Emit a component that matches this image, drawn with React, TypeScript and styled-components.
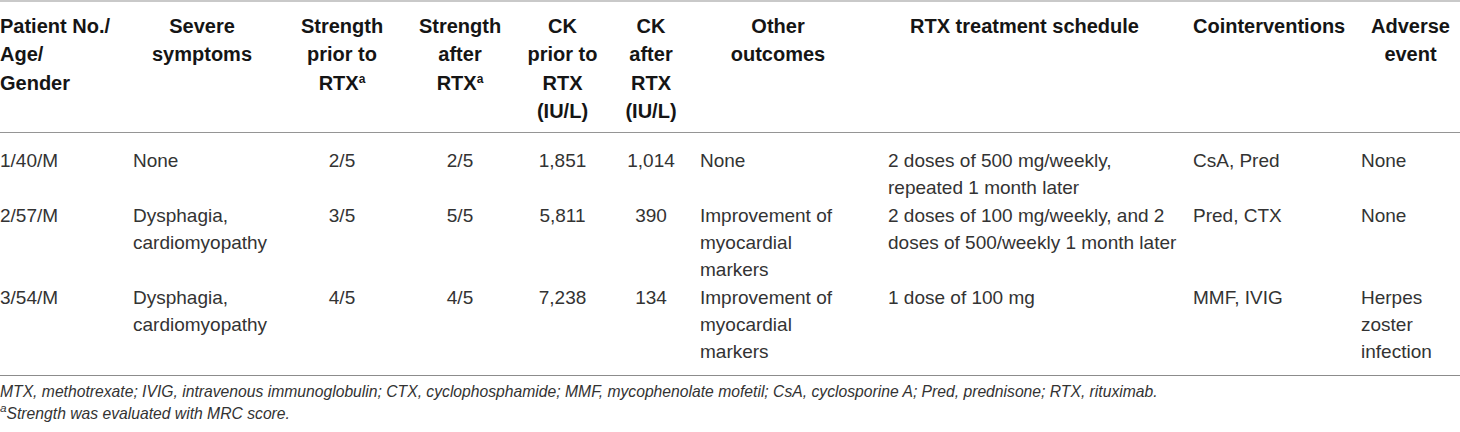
import React from "react";
import styled, { createGlobalStyle } from "styled-components";

type Align = "left" | "center";

interface Column {
  width: number;
  head: React.ReactNode;
  headAlign: Align;
  cellAlign: Align;
  padLeft: number;
  headPadRight: number;
  cellPadRight: number;
}

const GlobalStyle = createGlobalStyle`
  html, body {
    margin: 0;
    padding: 0;
    background: #ffffff;
  }
  body {
    font-family: "Liberation Sans", Arial, Helvetica, sans-serif;
    color: #222;
  }
`;

const Sup = styled.sup<{ $size?: number }>`
  font-size: ${(p) => p.$size ?? 0.6}em;
  line-height: 0;
  vertical-align: 0.6em;
`;

const columns: Column[] = [
  { width: 133, head: <>Patient No./<br />Age/<br />Gender</>, headAlign: "left", cellAlign: "left", padLeft: 0, headPadRight: 0, cellPadRight: 0 },
  { width: 138, head: <>Severe<br />symptoms</>, headAlign: "center", cellAlign: "left", padLeft: 0, headPadRight: 0, cellPadRight: 0 },
  { width: 142, head: <>Strength<br />prior to<br />RTX<Sup>a</Sup></>, headAlign: "center", cellAlign: "center", padLeft: 0, headPadRight: 0, cellPadRight: 0 },
  { width: 94, head: <>Strength<br />after<br />RTX<Sup>a</Sup></>, headAlign: "center", cellAlign: "center", padLeft: 0, headPadRight: 0, cellPadRight: 0 },
  { width: 111, head: <>CK<br />prior to<br />RTX<br />(IU/L)</>, headAlign: "center", cellAlign: "center", padLeft: 0, headPadRight: 0, cellPadRight: 0 },
  { width: 66, head: <>CK<br />after<br />RTX<br />(IU/L)</>, headAlign: "center", cellAlign: "center", padLeft: 0, headPadRight: 0, cellPadRight: 0 },
  { width: 188, head: <>Other<br />outcomes</>, headAlign: "center", cellAlign: "left", padLeft: 16, headPadRight: 16, cellPadRight: 16 },
  { width: 305, head: <>RTX treatment schedule</>, headAlign: "center", cellAlign: "left", padLeft: 16, headPadRight: 16, cellPadRight: 0 },
  { width: 184, head: <>Cointerventions</>, headAlign: "left", cellAlign: "left", padLeft: 16, headPadRight: 0, cellPadRight: 0 },
  { width: 99, head: <>Adverse<br />event</>, headAlign: "center", cellAlign: "left", padLeft: 0, headPadRight: 0, cellPadRight: 0 },
];

const rows: string[][] = [
  ["1/40/M", "None", "2/5", "2/5", "1,851", "1,014", "None", "2 doses of 500 mg/weekly, repeated 1 month later", "CsA, Pred", "None"],
  ["2/57/M", "Dysphagia, cardiomyopathy", "3/5", "5/5", "5,811", "390", "Improvement of myocardial markers", "2 doses of 100 mg/weekly, and 2 doses of 500/weekly 1 month later", "Pred, CTX", "None"],
  ["3/54/M", "Dysphagia, cardiomyopathy", "4/5", "4/5", "7,238", "134", "Improvement of myocardial markers", "1 dose of 100 mg", "MMF, IVIG", "Herpes zoster infection"],
];

const gridTemplate = columns.map((c) => `${c.width}px`).join(" ");

const TableWrapper = styled.div`
  width: 1460px;
  border-top: 2px solid #c9c9c9;
`;

const HeadRow = styled.div`
  display: grid;
  grid-template-columns: ${gridTemplate};
  padding: 10px 0 7px;
  border-bottom: 1px solid #959595;
`;

const HeadCell = styled.div<{ $align: Align; $pl: number; $pr: number }>`
  text-align: ${(p) => p.$align};
  padding-left: ${(p) => p.$pl}px;
  padding-right: ${(p) => p.$pr}px;
  font-size: 20px;
  font-weight: 700;
  line-height: 28.3px;
  color: #151515;
  white-space: nowrap;
`;

const Body = styled.div`
  padding: 13.5px 0 9.3px;
  border-bottom: 1px solid #8c8c8c;
`;

const BodyRow = styled.div`
  display: grid;
  grid-template-columns: ${gridTemplate};
  padding-bottom: 1px;
`;

const Cell = styled.div<{ $align: Align; $pl: number; $pr: number }>`
  text-align: ${(p) => p.$align};
  padding-left: ${(p) => p.$pl}px;
  padding-right: ${(p) => p.$pr}px;
  font-size: 19px;
  line-height: 27px;
  color: #333;
`;

const Footnotes = styled.div`
  padding-top: 5px;
  font-size: 15.7px;
  line-height: 21.6px;
  font-style: italic;
  color: #333;

  p {
    margin: 0;
  }
`;

export default function App() {
  return (
    <>
      <GlobalStyle />
      <TableWrapper>
        <HeadRow>
          {columns.map((col, i) => (
            <HeadCell key={i} $align={col.headAlign} $pl={col.padLeft} $pr={col.headPadRight}>
              {col.head}
            </HeadCell>
          ))}
        </HeadRow>
        <Body>
          {rows.map((row, r) => (
            <BodyRow key={r}>
              {row.map((value, i) => (
                <Cell
                  key={i}
                  $align={columns[i].cellAlign}
                  $pl={columns[i].padLeft}
                  $pr={columns[i].cellPadRight}
                >
                  {value}
                </Cell>
              ))}
            </BodyRow>
          ))}
        </Body>
        <Footnotes>
          <p>
            MTX, methotrexate; IVIG, intravenous immunoglobulin; CTX, cyclophosphamide; MMF, mycophenolate mofetil;
            CsA, cyclosporine A; Pred, prednisone; RTX, rituximab.
          </p>
          <p>
            <Sup $size={0.75}>a</Sup>Strength was evaluated with MRC score.
          </p>
        </Footnotes>
      </TableWrapper>
    </>
  );
}
